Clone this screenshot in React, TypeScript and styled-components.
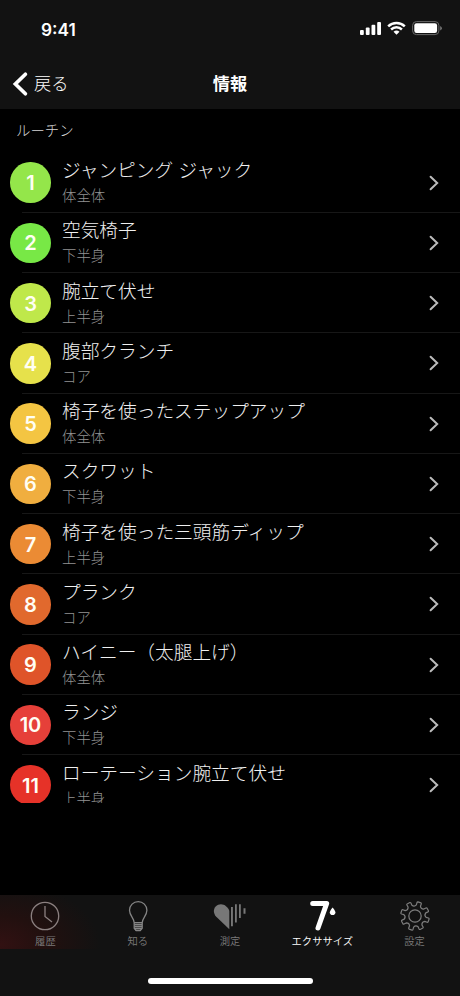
import React from "react";
import styled, { createGlobalStyle } from "styled-components";

const GlobalStyle = createGlobalStyle`
  * { box-sizing: border-box; }
  html, body { margin: 0; padding: 0; background: #000; }
  body { font-family: Inter, "Noto Sans CJK JP", sans-serif; color: #e6e6e6; -webkit-font-smoothing: antialiased; }
`;

const Screen = styled.div`
  width: 460px;
  height: 996px;
  display: flex;
  flex-direction: column;
  background: #000;
  overflow: hidden;
`;

const Header = styled.header`
  height: 108.5px;
  flex: none;
  background: #121212;
`;

const StatusBar = styled.div`
  height: 58px;
  display: flex;
  justify-content: space-between;
  padding: 0 18px 0 41px;
`;

const Time = styled.span`
  padding-top: 18px;
  font-size: 17.3px;
  line-height: 24px;
  font-weight: 600;
  color: #fff;
`;

const StatusIcons = styled.div`
  display: flex;
  align-items: flex-start;
  padding-top: 20px;
`;

const NavBar = styled.div`
  height: 50px;
  display: grid;
  grid-template-columns: 1fr auto 1fr;
  align-items: center;
  padding: 1px 12px 0;
`;

const BackButton = styled.a`
  display: flex;
  align-items: center;
  gap: 5px;
  font-size: 17.2px;
  line-height: 26px;
  font-weight: 300;
  color: #fff;
`;

const NavTitle = styled.h1`
  margin: 0;
  font-size: 17.2px;
  line-height: 26px;
  font-weight: 700;
  color: #fff;
`;

const SectionTitle = styled.h2`
  flex: none;
  height: 44px;
  margin: 0;
  padding: 11px 16px 0;
  font-size: 14.4px;
  line-height: 21px;
  font-weight: 300;
  color: #d5d5d5;
`;

const List = styled.ul`
  flex: none;
  height: 650.5px;
  margin: 0;
  padding: 0;
  list-style: none;
  overflow: hidden;
`;

const Row = styled.li`
  height: 60.25px;
  display: flex;
  align-items: center;
  padding: 0 20px 0 10.3px;
  background: linear-gradient(#171717, #171717) 22px 100% / 100% 1px no-repeat;
`;

const Badge = styled.span<{ $color: string }>`
  width: 40.4px;
  height: 40.4px;
  flex: none;
  display: flex;
  align-items: center;
  justify-content: center;
  padding-top: 1px;
  border-radius: 50%;
  background: ${(p) => p.$color};
  color: #fffef4;
  font-size: 20px;
  font-weight: 600;
`;

const RowText = styled.div`
  flex: 1;
  display: flex;
  flex-direction: column;
  padding-left: 11.3px;
`;

const RowTitle = styled.span`
  font-size: 18.7px;
  line-height: 26px;
  font-weight: 300;
  color: #f0f0f0;
`;

const RowDetail = styled.span`
  font-size: 14.4px;
  line-height: 23px;
  font-weight: 300;
  color: #929292;
`;

const Footer = styled.footer`
  margin-top: auto;
  height: 101.5px;
  flex: none;
  background: #121212;
`;

const TabBar = styled.nav`
  height: 54px;
  display: grid;
  grid-template-columns: repeat(5, 92.3px);
  justify-content: center;
  background: radial-gradient(ellipse 100px 64px at 0 50px, #321112, #22100f 45%, #121212);
`;

const Tab = styled.a<{ $active?: boolean }>`
  display: flex;
  flex-direction: column;
  align-items: center;
  padding-top: 3px;
  font-size: 10.3px;
  line-height: 15px;
  white-space: nowrap;
  font-weight: 350;
  color: ${(p) => (p.$active ? "#fff" : "#7b7b7b")};
  svg { height: 36px; flex: none; }
`;

const HomeArea = styled.div`
  height: 47px;
  display: flex;
  justify-content: center;
  padding-top: 29px;
`;

const HomeIndicator = styled.span`
  width: 165px;
  height: 6.5px;
  border-radius: 4px;
  background: #fff;
`;

const routine = [
  { name: "ジャンピング ジャック", area: "体全体", color: "#94e64a" },
  { name: "空気椅子", area: "下半身", color: "#78e846" },
  { name: "腕立て伏せ", area: "上半身", color: "#bfe84a" },
  { name: "腹部クランチ", area: "コア", color: "#e6e14b" },
  { name: "椅子を使ったステップアップ", area: "体全体", color: "#f4c542" },
  { name: "スクワット", area: "下半身", color: "#f0ae3f" },
  { name: "椅子を使った三頭筋ディップ", area: "上半身", color: "#eb8b34" },
  { name: "プランク", area: "コア", color: "#e1692d" },
  { name: "ハイニー（太腿上げ）", area: "体全体", color: "#df5429" },
  { name: "ランジ", area: "下半身", color: "#e64039" },
  { name: "ローテーション腕立て伏せ", area: "上半身", color: "#e63228" },
];

const Signal = () => (
  <svg width="82" height="18" viewBox="0 0 82 18" fill="#fff">
    <rect x="0" y="10" width="3.8" height="5" rx="1" />
    <rect x="5.8" y="7.5" width="3.8" height="7.5" rx="1" />
    <rect x="11.5" y="4.8" width="3.8" height="10.2" rx="1" />
    <rect x="17.2" y="2" width="3.8" height="13" rx="1" />
    <g fill="none" stroke="#fff" strokeWidth="2.5">
      <path d="M28.2 6.4a12 12 0 0 1 16.6 0" />
      <path d="M31.1 9.5a7.8 7.8 0 0 1 10.8 0" />
    </g>
    <path d="M33.5 11.8a4.4 4.4 0 0 1 6 0l-3 3z" />
    <rect x="52.6" y="1.6" width="26.3" height="13" rx="3.8" fill="none" stroke="#686868" />
    <rect x="54.3" y="3.3" width="22.8" height="9.6" rx="2.2" />
    <path d="M80.2 6v4.5q1.7-.7 1.7-2.25T80.2 6" fill="#777" />
  </svg>
);

const BackIcon = () => (
  <svg width="17" height="26" viewBox="0 0 17 26" fill="none" stroke="#fff" strokeWidth="3.7">
    <path d="M13.4 3.2L3.4 13l10 9.8" strokeLinecap="round" />
  </svg>
);

const Chevron = () => (
  <svg width="12" height="18" viewBox="0 0 12 18" fill="none" stroke="#bbb" strokeWidth="2">
    <path d="M2.6 2.7L9.2 9l-6.6 6.3" strokeLinecap="round" />
  </svg>
);

const ClockIcon = () => (
  <svg width="32" height="36" viewBox="0 0 32 36" fill="none" stroke="#8b8080" strokeWidth="1.3">
    <circle cx="16" cy="18" r="13.7" />
    <path d="M16 8v10.5l7 5.5" />
  </svg>
);

const BulbIcon = () => (
  <svg width="24" height="36" viewBox="0 0 24 36" fill="none" stroke="#858585" strokeWidth="1.3">
    <path d="M8.2 24.7c0-4.4-4.7-7-4.7-12.4a8.7 8.7 0 0 1 17.4 0c0 5.4-4.7 8-4.7 12.4z" />
    <path d="M8.4 26.5H16M8.4 28.5H16M8.4 30.5H16M9.5 32.4H15" />
    <path d="M8.2 25v5.2l2 2.5h4l2-2.5V25" />
  </svg>
);

const HeartIcon = () => (
  <svg width="34" height="36" viewBox="0 0 34 36" fill="#777">
    <path d="M16.3 31.3L3 18.4C.2 15.4.2 11.2 2.7 8.6c2.9-3 7.3-3 10.3-.3 2 1.8 3.3 3.2 3.3 5z" />
    <path d="M18 9h1.9v19.3H18zM22 6.3h1.8v18.2H22zM26 6.3h1.8v13.8H26zM30.5 10.3h2v5.5h-2z" />
  </svg>
);

const SevenIcon = () => (
  <svg width="28" height="36" viewBox="0 0 28 36" fill="#fff">
    <path d="M4.7 5.4h14L10 30" fill="none" stroke="#fff" strokeWidth="5" strokeLinecap="round" strokeLinejoin="round" />
    <path d="M24.6 9.5q2.8 3.5 2.8 4.8a2.8 2.8 0 0 1-5.6 0q0-1.3 2.8-4.8z" />
  </svg>
);

const TEETH = Array.from({ length: 8 }, (_, i) => i * 45 + 18);
const polar = (r: number, deg: number) => {
  const a = (deg * Math.PI) / 180;
  return `${(16 + r * Math.cos(a)).toFixed(2)} ${(18 + r * Math.sin(a)).toFixed(2)}`;
};
const gearPath =
  TEETH.map(
    (a, i) =>
      `${i ? "L" : "M"}${polar(11.2, a - 11)}L${polar(13.6, a - 9.5)}Q${polar(14.4, a - 9)} ${polar(14.4, a - 6)}L${polar(14.4, a + 6)}Q${polar(14.4, a + 9)} ${polar(13.6, a + 9.5)}L${polar(11.2, a + 11)}Q${polar(8.9, a + 22.5)} ${polar(11.2, a + 34)}`
  ).join("") + "Z";

const GearIcon = () => (
  <svg width="32" height="36" viewBox="0 0 32 36" fill="none" stroke="#7d7d7d" strokeWidth="1.2" strokeLinejoin="round">
    <path d={gearPath} />
    <circle cx="16" cy="18" r="6.2" />
  </svg>
);

const tabs = [
  { label: "履歴", Icon: ClockIcon },
  { label: "知る", Icon: BulbIcon },
  { label: "測定", Icon: HeartIcon },
  { label: "エクササイズ", Icon: SevenIcon, active: true },
  { label: "設定", Icon: GearIcon },
];

export default function App() {
  return (
    <Screen lang="ja">
      <GlobalStyle />
      <Header>
        <StatusBar>
          <Time>9:41</Time>
          <StatusIcons><Signal /></StatusIcons>
        </StatusBar>
        <NavBar>
          <BackButton><BackIcon />戻る</BackButton>
          <NavTitle>情報</NavTitle>
        </NavBar>
      </Header>
      <SectionTitle>ルーチン</SectionTitle>
      <List>
        {routine.map((item, i) => (
          <Row key={item.name}>
            <Badge $color={item.color}>{i + 1}</Badge>
            <RowText>
              <RowTitle>{item.name}</RowTitle>
              <RowDetail>{item.area}</RowDetail>
            </RowText>
            <Chevron />
          </Row>
        ))}
      </List>
      <Footer>
        <TabBar>
          {tabs.map(({ label, Icon, active }) => (
            <Tab key={label} $active={active}><Icon />{label}</Tab>
          ))}
        </TabBar>
        <HomeArea><HomeIndicator /></HomeArea>
      </Footer>
    </Screen>
  );
}
